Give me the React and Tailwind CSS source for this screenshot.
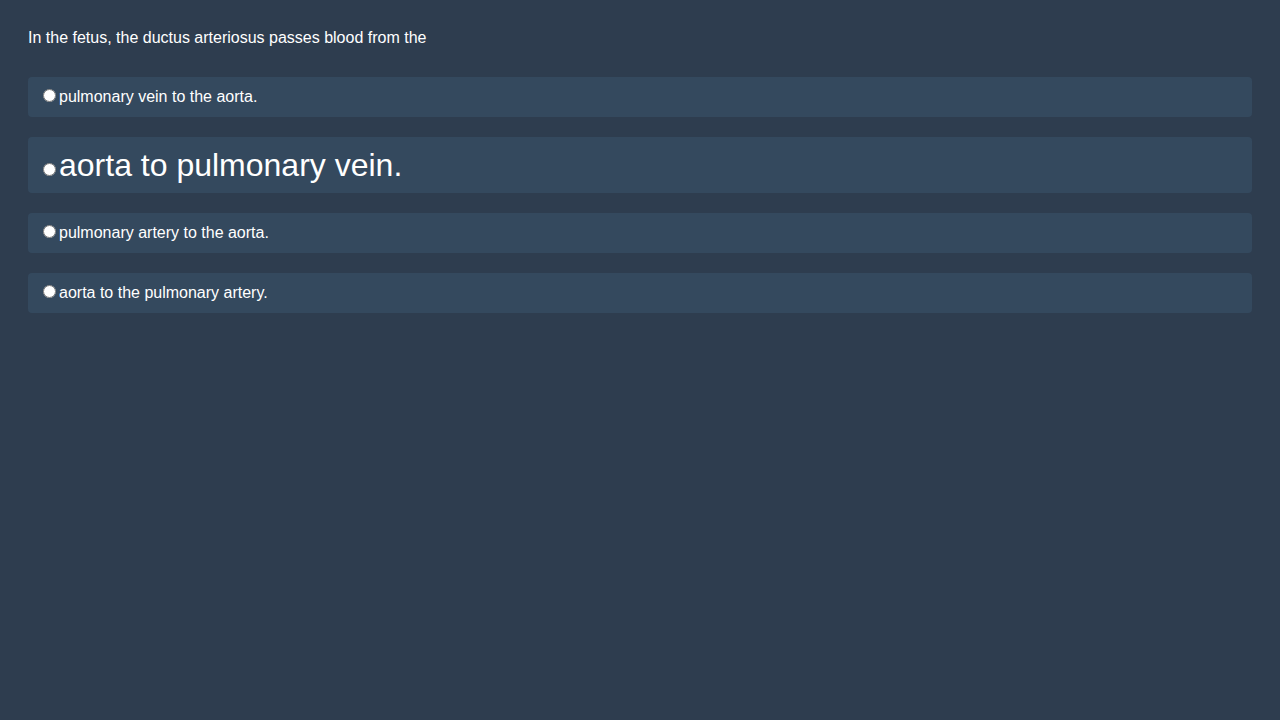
const OPTIONS = [
  { text: "pulmonary vein to the aorta.", big: false },
  { text: "aorta to pulmonary vein.", big: true },
  { text: "pulmonary artery to the aorta.", big: false },
  { text: "aorta to the pulmonary artery.", big: false },
];

export default function App() {
  return (
    <div className="min-h-screen bg-[#2e3d4f] p-[28px] text-white font-['Liberation_Sans',Arial,sans-serif]">
      <p className="text-base leading-[18px] mt-[1px] mb-[30px]">
        In the fetus, the ductus arteriosus passes blood from the
      </p>
      <div className="flex flex-col gap-[20px]">
        {OPTIONS.map((o, i) => (
          <label
            key={i}
            className={`block rounded bg-[#34495e] px-[10px] ${o.big ? "py-[10px] text-[32px] leading-[36px]" : "pt-[9px] pb-[11px] text-base leading-[19px]"}`}
          >
            <input type="radio" name="answer" className="mt-[3px] mr-[3px] ml-[5px]" />
            {o.text}
          </label>
        ))}
      </div>
    </div>
  );
}
